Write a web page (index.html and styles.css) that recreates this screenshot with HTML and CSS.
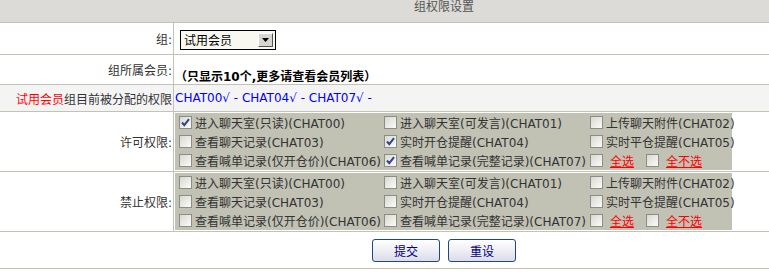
FILE: index.html
```html
<!DOCTYPE html>
<html lang="zh-CN">
<head>
  <meta charset="UTF-8">
  <title>组权限设置</title>
  <link rel="stylesheet" href="styles.css">
</head>
<body>
  <div class="wrap">
    <table class="perm">
      <tr>
        <th colspan="2" class="title">组权限设置</th>
      </tr>
      <tr class="r-group">
        <td class="label">组:</td>
        <td class="value">
          <span class="select">
            <span class="select-text">试用会员</span>
            <span class="select-btn"><svg width="7" height="4" viewBox="0 0 7 4"><polygon points="0,0 7,0 3.5,4" fill="#000"/></svg></span>
          </span>
        </td>
      </tr>
      <tr class="r-members">
        <td class="label">组所属会员:</td>
        <td class="value bottom"><b>（只显示10个,更多请查看会员列表）</b></td>
      </tr>
      <tr class="r-current">
        <td class="label"><span class="red">试用会员</span>组目前被分配的权限</td>
        <td class="value blue">CHAT00√ - CHAT04√ - CHAT07√ -</td>
      </tr>
      <!-- 许可权限 -->
      <tr class="r-box">
        <td class="label">许可权限:</td>
        <td class="value">
          <div class="box">
            <div class="item"><span class="cb on"><svg width="11" height="11" viewBox="0 0 11 11"><path d="M2 5.5 L4.3 8.2 L9 2.2" stroke="#34428c" stroke-width="2" fill="none"/></svg></span>进入聊天室(只读)(CHAT00)</div>
            <div class="item"><span class="cb"></span>进入聊天室(可发言)(CHAT01)</div>
            <div class="item"><span class="cb"></span>上传聊天附件(CHAT02)</div>
            <div class="item"><span class="cb"></span>查看聊天记录(CHAT03)</div>
            <div class="item"><span class="cb on"><svg width="11" height="11" viewBox="0 0 11 11"><path d="M2 5.5 L4.3 8.2 L9 2.2" stroke="#34428c" stroke-width="2" fill="none"/></svg></span>实时开仓提醒(CHAT04)</div>
            <div class="item"><span class="cb"></span>实时平仓提醒(CHAT05)</div>
            <div class="item"><span class="cb"></span>查看喊单记录(仅开仓价)(CHAT06)</div>
            <div class="item"><span class="cb on"><svg width="11" height="11" viewBox="0 0 11 11"><path d="M2 5.5 L4.3 8.2 L9 2.2" stroke="#34428c" stroke-width="2" fill="none"/></svg></span>查看喊单记录(完整记录)(CHAT07)</div>
            <div class="item"><span class="cb"></span><a class="sel">全选</a><span class="cb"></span><a class="sel">全不选</a></div>
          </div>
        </td>
      </tr>
      <!-- 禁止权限 -->
      <tr class="r-box">
        <td class="label">禁止权限:</td>
        <td class="value">
          <div class="box">
            <div class="item"><span class="cb"></span>进入聊天室(只读)(CHAT00)</div>
            <div class="item"><span class="cb"></span>进入聊天室(可发言)(CHAT01)</div>
            <div class="item"><span class="cb"></span>上传聊天附件(CHAT02)</div>
            <div class="item"><span class="cb"></span>查看聊天记录(CHAT03)</div>
            <div class="item"><span class="cb"></span>实时开仓提醒(CHAT04)</div>
            <div class="item"><span class="cb"></span>实时平仓提醒(CHAT05)</div>
            <div class="item"><span class="cb"></span>查看喊单记录(仅开仓价)(CHAT06)</div>
            <div class="item"><span class="cb"></span>查看喊单记录(完整记录)(CHAT07)</div>
            <div class="item"><span class="cb"></span><a class="sel">全选</a><span class="cb"></span><a class="sel">全不选</a></div>
          </div>
        </td>
      </tr>
      <tr class="r-btns">
        <td colspan="2">
          <button type="submit">提交</button>
          <button type="reset">重设</button>
        </td>
      </tr>
    </table>
  </div>
</body>
</html>
```

FILE: styles.css
```css
body{
  margin: 0;
  background: white;
  font: 12px "DejaVu Sans", "Noto Sans CJK SC", sans-serif;
  color: #333;
}
.wrap{
  overflow: hidden;
  width: 100%;
}
.perm{
  width: 888px;
  border-collapse: collapse;
}
.perm td, .perm th{
  padding: 0;
  border-bottom: 1px solid #c3c3b5;
}
.title{
  height: 22px;
  background: #dcdbd8;
  color: #555;
  font-weight: normal;
  vertical-align: top;
  line-height: 15px;
}
.label{
  width: 172px;
  text-align: right;
  padding-right: 1px !important;
  border-right: 1px solid #c3c3b5;
  white-space: nowrap;
}
.value{
  padding-left: 1px !important;
}
.r-group td{
  height: 31px;
}
.r-members td{
  height: 29px;
}
.value.bottom{
  vertical-align: bottom;
  line-height: 14px;
  color: black;
}
.r-current td{
  height: 26px;
  background: #f4f4f4;
}
.red{
  color: red;
}
.blue{
  color: #0000ff;
}

/* select (old windows look) */
.select{
  display: inline-flex;
  align-items: center;
  justify-content: space-between;
  box-sizing: border-box;
  width: 96px;
  height: 20px;
  margin-left: 5px;
  margin-top: 2px;
  border: 1px solid #000;
  background: #f8f8f1;
  color: black;
}
.select-text{
  padding-left: 3px;
}
.select-btn{
  display: flex;
  align-items: center;
  justify-content: center;
  box-sizing: border-box;
  width: 15px;
  height: 14px;
  margin-right: 2px;
  background: #d8d6d0;
  border: 1px solid;
  border-color: #fff #555 #555 #fff;
}

/* checkbox box */
.r-box td{
  padding-top: 1px;
  padding-bottom: 1px;
}
.box{
  display: grid;
  grid-template-columns: 205px 206px 146px;
  grid-auto-rows: 19px;
  background: #c1c1b4;
  width: 557px;
}
.item{
  display: flex;
  align-items: center;
  white-space: nowrap;
  color: #333;
}
.cb{
  display: inline-flex;
  align-items: center;
  justify-content: center;
  box-sizing: border-box;
  width: 13px;
  height: 13px;
  flex: none;
  margin: 0 3px 0 4px;
  border: 1px solid #8c8c88;
  background: linear-gradient(135deg, #d9d9d2, #fbfbf8);
}
.sel{
  color: red;
  text-decoration: underline;
  margin: 0 8px 0 4px;
}

/* buttons */
.r-btns td{
  height: 36px;
  text-align: center;
}
.r-btns button{
  width: 68px;
  height: 23px;
  margin: 0 2px;
  padding: 0;
  font: 12px "DejaVu Sans", "Noto Sans CJK SC", sans-serif;
  color: #000080;
  border: 1px solid #1e4a7a;
  border-radius: 3px;
  background: linear-gradient(#ffffff, #f0f0f6 45%, #dcdcea);
}
```
